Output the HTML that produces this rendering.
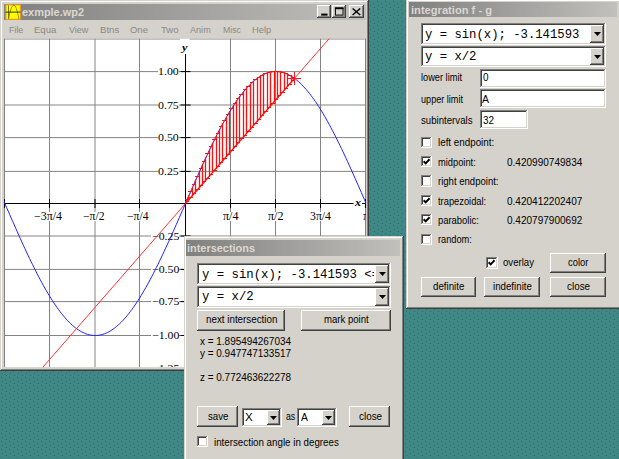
<!DOCTYPE html>
<html lang="en"><head><meta charset="utf-8"><title>exmple.wp2</title>
<style>
html,body{margin:0;padding:0}
body{width:619px;height:459px;overflow:hidden;position:relative;background:#3f8886}
#bg{position:absolute;left:0;top:0}
div,span,svg{position:absolute;display:block}
span{white-space:pre;transform-origin:0 0}
.w{left:0;top:0;width:619px;height:459px;overflow:hidden;will-change:opacity}
</style></head>
<body>
<svg id="bg" width="619" height="459"><defs><pattern id="dp" width="8" height="8" patternUnits="userSpaceOnUse"><rect width="8" height="8" fill="#3f8886"/><rect x="1" y="1" width="1" height="1" fill="#2f6f70"/><rect x="5" y="3" width="1" height="1" fill="#2f6f70"/><rect x="2" y="5" width="1" height="1" fill="#2f6f70"/><rect x="6" y="7" width="1" height="1" fill="#2f6f70"/></pattern></defs><rect width="619" height="459" fill="url(#dp)"/></svg>
<div class="w">
<div style="left:0.00px;top:0.00px;width:369.00px;height:371.00px;background:#d5d2cb;box-shadow:inset -1px -1px 0 #404040,inset 1px 1px 0 #d5d2cb,inset -2px -2px 0 #808080,inset 2px 2px 0 #fff;"></div>
<div style="left:4.00px;top:4.00px;width:361.50px;height:16.00px;background:linear-gradient(90deg,#808080,#c2c0bc);"></div>
<svg style="left:5px;top:4px" width="16" height="16" viewBox="-0.5 -0.5 16 16"><rect x="0.4" y="0.4" width="14.4" height="14.4" fill="#ffff00" stroke="#f49a18" stroke-width="1"/><path d="M3 1V14" stroke="#6a6a00" stroke-width="0.9" fill="none"/><path d="M3 14.5Q8.4 -13.4 13.4 14.5" stroke="#77770a" stroke-width="0.8" fill="none"/><path d="M0 7.6H15" stroke="#202000" stroke-width="0.9" fill="none"/></svg>
<div style="left:317.30px;top:5.40px;width:14.00px;height:12.70px;background:#d5d2cb;box-shadow:inset -1px -1px 0 #404040,inset 1px 1px 0 #fff,inset -2px -2px 0 #808080,inset 2px 2px 0 #d5d2cb;"></div>
<div style="left:332.10px;top:5.40px;width:14.30px;height:12.70px;background:#d5d2cb;box-shadow:inset -1px -1px 0 #404040,inset 1px 1px 0 #fff,inset -2px -2px 0 #808080,inset 2px 2px 0 #d5d2cb;"></div>
<div style="left:348.80px;top:5.40px;width:14.80px;height:12.70px;background:#d5d2cb;box-shadow:inset -1px -1px 0 #404040,inset 1px 1px 0 #fff,inset -2px -2px 0 #808080,inset 2px 2px 0 #d5d2cb;"></div>
<svg style="left:317px;top:5px" width="48" height="14" viewBox="317 5 48 14"><rect x="321.2" y="13.6" width="6.3" height="2" fill="#000"/><rect x="335.4" y="8.1" width="7.6" height="7" fill="none" stroke="#000" stroke-width="1"/><rect x="334.9" y="7.4" width="8.6" height="1.8" fill="#000"/><path d="M352.6 8.5L360.2 15M360.2 8.5L352.6 15" stroke="#000" stroke-width="1.5"/></svg>
<svg style="left:0;top:0" width="619" height="459" viewBox="0 0 619 459"><defs><clipPath id="gc"><rect x="4.0" y="38.4" width="362.0" height="328.90000000000003"/></clipPath></defs><g clip-path="url(#gc)"><rect x="4.0" y="38.4" width="362.0" height="328.90000000000003" fill="#fff"/><path d="M4.5 38.4V367.3M49.5 38.4V367.3M95.0 38.4V367.3M139.5 38.4V367.3M230.5 38.4V367.3M275.5 38.4V367.3M320.5 38.4V367.3M365.5 38.4V367.3M4.0 368.5H366M4.0 335.5H366M4.0 301.6H366M4.0 269.4H366M4.0 236.0H366M4.0 171.4H366M4.0 137.6H366M4.0 105.0H366M4.0 71.6H366M4.0 39.0H366" stroke="#848484" stroke-width="1" fill="none"/></g></svg>
<div style="left:4px;top:38px;width:362px;height:329px;overflow:hidden"><div style="left:-4px;top:-38px;width:619px;height:459px"><div style="left:33.50px;top:211.95px;width:29.00px;height:8.97px;background:#fff"></div><span style="left:34.00px;top:210.00px;font:normal normal 11.5px/1.2 'Liberation Serif', serif;color:#000;transform:scaleX(1.0370)">−3π/4</span><div style="left:82.25px;top:211.95px;width:22.50px;height:8.97px;background:#fff"></div><span style="left:82.75px;top:210.00px;font:normal normal 11.5px/1.2 'Liberation Serif', serif;color:#000;transform:scaleX(1.0118)">−π/2</span><div style="left:126.75px;top:211.95px;width:22.50px;height:8.97px;background:#fff"></div><span style="left:127.25px;top:210.00px;font:normal normal 11.5px/1.2 'Liberation Serif', serif;color:#000;transform:scaleX(1.0118)">−π/4</span><div style="left:222.25px;top:211.95px;width:16.50px;height:8.97px;background:#fff"></div><span style="left:222.75px;top:210.00px;font:normal normal 11.5px/1.2 'Liberation Serif', serif;color:#000;transform:scaleX(1.0497)">π/4</span><div style="left:267.25px;top:211.95px;width:16.50px;height:8.97px;background:#fff"></div><span style="left:267.75px;top:210.00px;font:normal normal 11.5px/1.2 'Liberation Serif', serif;color:#000;transform:scaleX(1.0497)">π/2</span><div style="left:309.50px;top:211.95px;width:22.00px;height:8.97px;background:#fff"></div><span style="left:310.00px;top:210.00px;font:normal normal 11.5px/1.2 'Liberation Serif', serif;color:#000;transform:scaleX(1.0236)">3π/4</span><div style="left:157.70px;top:67.50px;width:21.80px;height:8.58px;background:#fff"></div><span style="left:158.20px;top:65.20px;font:normal normal 11px/1.2 'Liberation Serif', serif;color:#000;transform:scaleX(1.0805)">1.00</span><div style="left:157.70px;top:100.90px;width:21.80px;height:8.58px;background:#fff"></div><span style="left:158.20px;top:98.60px;font:normal normal 11px/1.2 'Liberation Serif', serif;color:#000;transform:scaleX(1.0805)">0.75</span><div style="left:157.70px;top:133.50px;width:21.80px;height:8.58px;background:#fff"></div><span style="left:158.20px;top:131.20px;font:normal normal 11px/1.2 'Liberation Serif', serif;color:#000;transform:scaleX(1.0805)">0.50</span><div style="left:157.70px;top:167.30px;width:21.80px;height:8.58px;background:#fff"></div><span style="left:158.20px;top:165.00px;font:normal normal 11px/1.2 'Liberation Serif', serif;color:#000;transform:scaleX(1.0805)">0.25</span><div style="left:151.10px;top:231.90px;width:28.40px;height:8.58px;background:#fff"></div><span style="left:151.60px;top:229.60px;font:normal normal 11px/1.2 'Liberation Serif', serif;color:#000;transform:scaleX(1.0758)">−0.25</span><div style="left:151.10px;top:265.30px;width:28.40px;height:8.58px;background:#fff"></div><span style="left:151.60px;top:263.00px;font:normal normal 11px/1.2 'Liberation Serif', serif;color:#000;transform:scaleX(1.0758)">−0.50</span><div style="left:151.10px;top:297.50px;width:28.40px;height:8.58px;background:#fff"></div><span style="left:151.60px;top:295.20px;font:normal normal 11px/1.2 'Liberation Serif', serif;color:#000;transform:scaleX(1.0758)">−0.75</span><div style="left:151.10px;top:331.40px;width:28.40px;height:8.58px;background:#fff"></div><span style="left:151.60px;top:329.10px;font:normal normal 11px/1.2 'Liberation Serif', serif;color:#000;transform:scaleX(1.0758)">−1.00</span><div style="left:151.10px;top:364.40px;width:28.40px;height:8.58px;background:#fff"></div><span style="left:151.60px;top:362.10px;font:normal normal 11px/1.2 'Liberation Serif', serif;color:#000;transform:scaleX(1.0758)">−1.25</span><div style="left:181.30px;top:43.25px;width:6.40px;height:8.19px;background:#fff"></div><span style="left:181.80px;top:41.60px;font:italic bold 10.5px/1.2 'Liberation Serif', serif;color:#000;transform:scaleX(1.1559)">y</span><div style="left:354.50px;top:198.65px;width:7.00px;height:8.19px;background:#fff"></div><span style="left:355.00px;top:197.00px;font:italic bold 10.5px/1.2 'Liberation Serif', serif;color:#000;transform:scaleX(1.1429)">x</span><span style="left:363.00px;top:210.00px;font:normal normal 11.5px/1.2 'Liberation Serif', serif;color:#000;transform:scaleX(1.0323)">π</span></div></div>
<svg style="left:0;top:0" width="619" height="459" viewBox="0 0 619 459"><g clip-path="url(#gc)"><path d="M4.0 203.5H353.5M362 203.5H366M185.5 54V367.3M4.5 199.0V208.0M49.5 199.0V208.0M95.0 199.0V208.0M139.5 199.0V208.0M230.5 199.0V208.0M275.5 199.0V208.0M320.5 199.0V208.0M365.5 199.0V208.0M180.5 368.5H190.5M180.5 335.5H190.5M180.5 301.6H190.5M180.5 269.4H190.5M180.5 236.0H190.5M180.5 171.4H190.5M180.5 137.6H190.5M180.5 105.0H190.5M180.5 71.6H190.5" stroke="#000" stroke-width="1" fill="none"/><rect x="180" y="38.4" width="9.5" height="1.6" fill="#fff"/><path d="M1.99 196.90L3.51 200.41L5.04 203.92L6.57 207.43L8.10 210.94L9.63 214.44L11.16 217.94L12.69 221.42L14.22 224.89L15.75 228.35L17.28 231.79L18.81 235.21L20.34 238.60L21.87 241.97L23.40 245.32L24.92 248.63L26.45 251.91L27.98 255.16L29.51 258.38L31.04 261.55L32.57 264.68L34.10 267.77L35.63 270.81L37.16 273.81L38.69 276.76L40.22 279.65L41.75 282.49L43.28 285.27L44.81 288.00L46.33 290.67L47.86 293.27L49.39 295.81L50.92 298.29L52.45 300.70L53.98 303.04L55.51 305.31L57.04 307.51L58.57 309.63L60.10 311.68L61.63 313.66L63.16 315.55L64.69 317.37L66.22 319.10L67.74 320.76L69.27 322.33L70.80 323.81L72.33 325.22L73.86 326.53L75.39 327.76L76.92 328.90L78.45 329.95L79.98 330.91L81.51 331.79L83.04 332.57L84.57 333.26L86.10 333.86L87.63 334.36L89.15 334.78L90.68 335.10L92.21 335.32L93.74 335.46L95.27 335.50L96.80 335.45L98.33 335.30L99.86 335.06L101.39 334.73L102.92 334.31L104.45 333.79L105.98 333.18L107.51 332.48L109.04 331.69L110.56 330.80L112.09 329.83L113.62 328.77L115.15 327.62L116.68 326.38L118.21 325.05L119.74 323.64L121.27 322.14L122.80 320.56L124.33 318.90L125.86 317.15L127.39 315.33L128.92 313.42L130.45 311.44L131.97 309.38L133.50 307.25L135.03 305.04L136.56 302.76L138.09 300.42L139.62 298.00L141.15 295.51L142.68 292.96L144.21 290.35L145.74 287.68L147.27 284.94L148.80 282.15L150.33 279.30L151.86 276.40L153.38 273.45L154.91 270.45L156.44 267.40L157.97 264.31L159.50 261.17L161.03 257.99L162.56 254.78L164.09 251.52L165.62 248.24L167.15 244.92L168.68 241.57L170.21 238.20L171.74 234.80L173.27 231.37L174.79 227.93L176.32 224.48L177.85 221.00L179.38 217.52L180.91 214.02L182.44 210.52L183.97 207.01L185.50 203.50L187.03 199.99L188.56 196.48L190.09 192.98L191.62 189.48L193.15 186.00L194.68 182.52L196.21 179.07L197.73 175.63L199.26 172.20L200.79 168.80L202.32 165.43L203.85 162.08L205.38 158.76L206.91 155.48L208.44 152.22L209.97 149.01L211.50 145.83L213.03 142.69L214.56 139.60L216.09 136.55L217.62 133.55L219.14 130.60L220.67 127.70L222.20 124.85L223.73 122.06L225.26 119.32L226.79 116.65L228.32 114.04L229.85 111.49L231.38 109.00L232.91 106.58L234.44 104.24L235.97 101.96L237.50 99.75L239.03 97.62L240.55 95.56L242.08 93.58L243.61 91.67L245.14 89.85L246.67 88.10L248.20 86.44L249.73 84.86L251.26 83.36L252.79 81.95L254.32 80.62L255.85 79.38L257.38 78.23L258.91 77.17L260.44 76.20L261.96 75.31L263.49 74.52L265.02 73.82L266.55 73.21L268.08 72.69L269.61 72.27L271.14 71.94L272.67 71.70L274.20 71.55L275.73 71.50L277.26 71.54L278.79 71.68L280.32 71.90L281.85 72.22L283.37 72.64L284.90 73.14L286.43 73.74L287.96 74.43L289.49 75.21L291.02 76.09L292.55 77.05L294.08 78.10L295.61 79.24L297.14 80.47L298.67 81.78L300.20 83.19L301.73 84.67L303.26 86.24L304.78 87.90L306.31 89.63L307.84 91.45L309.37 93.34L310.90 95.32L312.43 97.37L313.96 99.49L315.49 101.69L317.02 103.96L318.55 106.30L320.08 108.71L321.61 111.19L323.14 113.73L324.67 116.33L326.19 119.00L327.72 121.73L329.25 124.51L330.78 127.35L332.31 130.24L333.84 133.19L335.37 136.19L336.90 139.23L338.43 142.32L339.96 145.45L341.49 148.62L343.02 151.84L344.55 155.09L346.08 158.37L347.60 161.68L349.13 165.03L350.66 168.40L352.19 171.79L353.72 175.21L355.25 178.65L356.78 182.11L358.31 185.58L359.84 189.06L361.37 192.56L362.90 196.06L364.43 199.57L365.96 203.08L367.49 206.59L369.01 210.10" stroke="#2020ff" stroke-width="1" fill="none"/><path d="M-4.25 421.30L335.00 31.90" stroke="#ff2828" stroke-width="0.95" fill="none"/><path d="M185.5 204.0V203.0M188.5 200.1V195.2M192.5 196.2V187.4M195.5 192.3V179.7M199.5 188.4V172.0M202.5 184.5V164.5M205.5 180.5V157.1M209.5 176.6V149.8M212.5 172.7V142.8M216.5 168.8V135.9M219.5 164.9V129.3M222.5 161.0V122.9M226.5 157.1V116.9M229.5 153.2V111.1M233.5 149.3V105.7M236.5 145.4V100.6M239.5 141.4V95.8M243.5 137.5V91.4M246.5 133.6V87.5M250.5 129.7V83.9M253.5 125.8V80.7M257.5 121.9V78.0M260.5 118.0V75.7M263.5 114.1V73.9M267.5 110.2V72.5M270.5 106.3V71.5M274.5 102.4V71.1M277.5 98.4V71.1M280.5 94.5V71.5M284.5 90.6V72.4M287.5 86.7V73.8M291.5 82.8V75.6M294.5 78.9V77.9" stroke="#ff1010" stroke-width="1.3" fill="none"/><path d="M185 199.5H189M185 201.5H189M188 191.5H193M188 197.5H193M192 184.5H196M192 193.5H196M195 176.5H200M195 189.5H200M199 168.5H203M199 185.5H203M202 161.5H206M202 181.5H206M205 153.5H210M205 178.5H210M209 146.5H213M209 174.5H213M212 139.5H217M212 170.5H217M216 133.5H220M216 166.5H220M219 126.5H223M219 162.5H223M222 120.5H227M222 158.5H227M226 114.5H230M226 154.5H230M229 108.5H234M229 150.5H234M233 103.5H237M233 146.5H237M236 98.5H240M236 142.5H240M239 94.5H244M239 138.5H244M243 89.5H247M243 135.5H247M246 86.5H251M246 131.5H251M250 82.5H254M250 127.5H254M253 79.5H258M253 123.5H258M257 77.5H261M257 119.5H261M260 75.5H264M260 115.5H264M263 73.5H268M263 111.5H268M267 72.5H271M267 107.5H271M270 71.5H275M270 103.5H275M274 71.5H278M274 99.5H278M277 71.5H281M277 95.5H281M280 72.5H285M280 92.5H285M284 73.5H288M284 88.5H288M287 75.5H292M287 84.5H292M291 77.5H295M291 80.5H295" stroke="#ff1010" stroke-width="1.2" fill="none"/><path d="M185.50 203.50L188.91 195.69L192.31 187.90L195.72 180.17L199.12 172.52L202.53 164.97L205.94 157.57L209.34 150.32L212.75 143.26L216.15 136.42L219.56 129.80L222.97 123.45L226.37 117.38L229.78 111.61L233.18 106.16L236.59 101.05L239.99 96.30L243.40 91.93L246.81 87.95L250.21 84.38L253.62 81.22L257.02 78.49L260.43 76.20L263.84 74.36L267.24 72.97L270.65 72.03L274.05 71.56L277.46 71.55L280.87 72.01L284.27 72.92L287.68 74.30L291.08 76.12L294.49 78.40" stroke="#ff1010" stroke-width="0.8" fill="none" opacity="0.6"/><path d="M185.50 203.50L294.49 78.40" stroke="#ff1010" stroke-width="1.3" fill="none" opacity="0.9"/><path d="M288.00 78.50H301.00M294.50 72.00V85.00" stroke="#ff1818" stroke-width="1" fill="none"/></g></svg>
<span style="left:22.00px;top:5.70px;font:normal bold 11px/1.2 'Liberation Sans', sans-serif;color:#dcd8d0;transform:scaleX(0.9942)">exmple.wp2</span>
<span style="left:9.00px;top:24.20px;font:normal normal 9.6px/1.2 'Liberation Sans', sans-serif;color:#8a8884;transform:scaleX(0.9244)">File</span>
<span style="left:34.40px;top:24.20px;font:normal normal 9.6px/1.2 'Liberation Sans', sans-serif;color:#8a8884;transform:scaleX(0.9908)">Equa</span>
<span style="left:68.50px;top:24.20px;font:normal normal 9.6px/1.2 'Liberation Sans', sans-serif;color:#8a8884;transform:scaleX(0.9358)">View</span>
<span style="left:99.50px;top:24.20px;font:normal normal 9.6px/1.2 'Liberation Sans', sans-serif;color:#8a8884;transform:scaleX(1.0050)">Btns</span>
<span style="left:130.40px;top:24.20px;font:normal normal 9.6px/1.2 'Liberation Sans', sans-serif;color:#8a8884;transform:scaleX(0.9867)">One</span>
<span style="left:160.70px;top:24.20px;font:normal normal 9.6px/1.2 'Liberation Sans', sans-serif;color:#8a8884;transform:scaleX(0.9938)">Two</span>
<span style="left:190.00px;top:24.20px;font:normal normal 9.6px/1.2 'Liberation Sans', sans-serif;color:#8a8884;transform:scaleX(0.9470)">Anim</span>
<span style="left:222.50px;top:24.20px;font:normal normal 9.6px/1.2 'Liberation Sans', sans-serif;color:#8a8884;transform:scaleX(0.9027)">Misc</span>
<span style="left:251.90px;top:24.20px;font:normal normal 9.6px/1.2 'Liberation Sans', sans-serif;color:#8a8884;transform:scaleX(0.9729)">Help</span>
</div>
<div class="w">
<div style="left:406.00px;top:-1.00px;width:230.00px;height:310.20px;background:#d5d2cb;box-shadow:inset -1px -1px 0 #404040,inset 1px 1px 0 #d5d2cb,inset -2px -2px 0 #808080,inset 2px 2px 0 #fff;"></div>
<div style="left:409.00px;top:2.00px;width:208.00px;height:15.30px;background:linear-gradient(90deg,#808080,#c2c0bc);"></div>
<div style="left:420.50px;top:23.30px;width:185.50px;height:21.60px;background:#fff;box-shadow:inset -1px -1px 0 #fff,inset 1px 1px 0 #808080,inset -2px -2px 0 #d5d2cb,inset 2px 2px 0 #404040;"></div>
<div style="left:590.00px;top:25.30px;width:14.00px;height:17.60px;background:#d5d2cb;box-shadow:inset -1px -1px 0 #404040,inset 1px 1px 0 #fff,inset -2px -2px 0 #808080,inset 2px 2px 0 #d5d2cb;"></div>
<svg style="left:593.50px;top:32.40px" width="7" height="4" viewBox="0 0 7 4"><path d="M0 0H7L3.5 4Z" fill="#000"/></svg>
<div style="left:420.50px;top:45.90px;width:185.50px;height:21.20px;background:#fff;box-shadow:inset -1px -1px 0 #fff,inset 1px 1px 0 #808080,inset -2px -2px 0 #d5d2cb,inset 2px 2px 0 #404040;"></div>
<div style="left:590.00px;top:47.90px;width:14.00px;height:17.20px;background:#d5d2cb;box-shadow:inset -1px -1px 0 #404040,inset 1px 1px 0 #fff,inset -2px -2px 0 #808080,inset 2px 2px 0 #d5d2cb;"></div>
<svg style="left:593.50px;top:54.80px" width="7" height="4" viewBox="0 0 7 4"><path d="M0 0H7L3.5 4Z" fill="#000"/></svg>
<div style="left:479.50px;top:68.80px;width:126.00px;height:18.80px;background:#fff;box-shadow:inset -1px -1px 0 #fff,inset 1px 1px 0 #808080,inset -2px -2px 0 #d5d2cb,inset 2px 2px 0 #404040;"></div>
<div style="left:479.50px;top:89.40px;width:126.00px;height:19.00px;background:#fff;box-shadow:inset -1px -1px 0 #fff,inset 1px 1px 0 #808080,inset -2px -2px 0 #d5d2cb,inset 2px 2px 0 #404040;"></div>
<div style="left:479.50px;top:110.20px;width:48.90px;height:19.00px;background:#fff;box-shadow:inset -1px -1px 0 #fff,inset 1px 1px 0 #808080,inset -2px -2px 0 #d5d2cb,inset 2px 2px 0 #404040;"></div>
<div style="left:420.60px;top:136.70px;width:11.20px;height:11.20px;background:#fff;box-shadow:inset -1px -1px 0 #fff,inset 1px 1px 0 #808080,inset -2px -2px 0 #d5d2cb,inset 2px 2px 0 #404040;"></div>
<div style="left:420.60px;top:155.90px;width:11.20px;height:11.20px;background:#fff;box-shadow:inset -1px -1px 0 #fff,inset 1px 1px 0 #808080,inset -2px -2px 0 #d5d2cb,inset 2px 2px 0 #404040;"></div>
<svg style="left:420.60px;top:155.90px" width="11.2" height="11.2" viewBox="0 0 11 11"><path d="M2.6 5.2L4.6 7.2L8.4 3.2" stroke="#000" stroke-width="1.9" fill="none"/></svg>
<div style="left:420.60px;top:175.40px;width:11.20px;height:11.20px;background:#fff;box-shadow:inset -1px -1px 0 #fff,inset 1px 1px 0 #808080,inset -2px -2px 0 #d5d2cb,inset 2px 2px 0 #404040;"></div>
<div style="left:420.60px;top:194.80px;width:11.20px;height:11.20px;background:#fff;box-shadow:inset -1px -1px 0 #fff,inset 1px 1px 0 #808080,inset -2px -2px 0 #d5d2cb,inset 2px 2px 0 #404040;"></div>
<svg style="left:420.60px;top:194.80px" width="11.2" height="11.2" viewBox="0 0 11 11"><path d="M2.6 5.2L4.6 7.2L8.4 3.2" stroke="#000" stroke-width="1.9" fill="none"/></svg>
<div style="left:420.60px;top:214.20px;width:11.20px;height:11.20px;background:#fff;box-shadow:inset -1px -1px 0 #fff,inset 1px 1px 0 #808080,inset -2px -2px 0 #d5d2cb,inset 2px 2px 0 #404040;"></div>
<svg style="left:420.60px;top:214.20px" width="11.2" height="11.2" viewBox="0 0 11 11"><path d="M2.6 5.2L4.6 7.2L8.4 3.2" stroke="#000" stroke-width="1.9" fill="none"/></svg>
<div style="left:420.60px;top:233.80px;width:11.20px;height:11.20px;background:#fff;box-shadow:inset -1px -1px 0 #fff,inset 1px 1px 0 #808080,inset -2px -2px 0 #d5d2cb,inset 2px 2px 0 #404040;"></div>
<div style="left:486.40px;top:257.40px;width:11.20px;height:11.20px;background:#fff;box-shadow:inset -1px -1px 0 #fff,inset 1px 1px 0 #808080,inset -2px -2px 0 #d5d2cb,inset 2px 2px 0 #404040;"></div>
<svg style="left:486.40px;top:257.40px" width="11.2" height="11.2" viewBox="0 0 11 11"><path d="M2.6 5.2L4.6 7.2L8.4 3.2" stroke="#000" stroke-width="1.9" fill="none"/></svg>
<div style="left:550.00px;top:252.60px;width:56.00px;height:20.60px;background:#d5d2cb;box-shadow:inset -1px -1px 0 #404040,inset 1px 1px 0 #fff,inset -2px -2px 0 #808080,inset 2px 2px 0 #d5d2cb;"></div>
<div style="left:420.50px;top:276.60px;width:55.50px;height:20.60px;background:#d5d2cb;box-shadow:inset -1px -1px 0 #404040,inset 1px 1px 0 #fff,inset -2px -2px 0 #808080,inset 2px 2px 0 #d5d2cb;"></div>
<div style="left:484.00px;top:276.60px;width:55.60px;height:20.60px;background:#d5d2cb;box-shadow:inset -1px -1px 0 #404040,inset 1px 1px 0 #fff,inset -2px -2px 0 #808080,inset 2px 2px 0 #d5d2cb;"></div>
<div style="left:550.00px;top:276.60px;width:56.00px;height:20.60px;background:#d5d2cb;box-shadow:inset -1px -1px 0 #404040,inset 1px 1px 0 #fff,inset -2px -2px 0 #808080,inset 2px 2px 0 #d5d2cb;"></div>
<span style="left:411.00px;top:3.60px;font:normal bold 11px/1.2 'Liberation Sans', sans-serif;color:#dcd8d0;transform:scaleX(1.0119)">integration f - g</span>
<span style="left:424.60px;top:28.40px;font:normal normal 12.4px/1.2 'Liberation Mono', monospace;color:#000;transform:scaleX(0.9884)">y = sin(x); -3.141593</span>
<span style="left:424.60px;top:50.40px;font:normal normal 12.4px/1.2 'Liberation Mono', monospace;color:#000;transform:scaleX(0.9882)">y = x/2</span>
<span style="left:421.00px;top:71.20px;font:normal normal 11px/1.2 'Liberation Sans', sans-serif;color:#000;transform:scaleX(0.8383)">lower limit</span>
<span style="left:421.00px;top:92.60px;font:normal normal 11px/1.2 'Liberation Sans', sans-serif;color:#000;transform:scaleX(0.8276)">upper limit</span>
<span style="left:421.00px;top:113.60px;font:normal normal 11px/1.2 'Liberation Sans', sans-serif;color:#000;transform:scaleX(0.8773)">subintervals</span>
<span style="left:482.50px;top:71.40px;font:normal normal 11px/1.2 'Liberation Sans', sans-serif;color:#000;transform:scaleX(0.8980)">0</span>
<span style="left:482.00px;top:92.60px;font:normal normal 11px/1.2 'Liberation Sans', sans-serif;color:#000;transform:scaleX(0.9532)">A</span>
<span style="left:482.50px;top:113.60px;font:normal normal 11px/1.2 'Liberation Sans', sans-serif;color:#000;transform:scaleX(0.8980)">32</span>
<span style="left:438.00px;top:136.20px;font:normal normal 11px/1.2 'Liberation Sans', sans-serif;color:#000;transform:scaleX(0.8921)">left endpoint:</span>
<span style="left:438.00px;top:155.50px;font:normal normal 11px/1.2 'Liberation Sans', sans-serif;color:#000;transform:scaleX(0.8468)">midpoint:</span>
<span style="left:507.00px;top:155.50px;font:normal normal 11px/1.2 'Liberation Sans', sans-serif;color:#000;transform:scaleX(0.9117)">0.420990749834</span>
<span style="left:438.00px;top:175.10px;font:normal normal 11px/1.2 'Liberation Sans', sans-serif;color:#000;transform:scaleX(0.8678)">right endpoint:</span>
<span style="left:438.00px;top:194.50px;font:normal normal 11px/1.2 'Liberation Sans', sans-serif;color:#000;transform:scaleX(0.8475)">trapezoidal:</span>
<span style="left:507.00px;top:194.50px;font:normal normal 11px/1.2 'Liberation Sans', sans-serif;color:#000;transform:scaleX(0.9117)">0.420412202407</span>
<span style="left:438.00px;top:213.80px;font:normal normal 11px/1.2 'Liberation Sans', sans-serif;color:#000;transform:scaleX(0.8553)">parabolic:</span>
<span style="left:507.00px;top:213.80px;font:normal normal 11px/1.2 'Liberation Sans', sans-serif;color:#000;transform:scaleX(0.9117)">0.420797900692</span>
<span style="left:438.00px;top:233.20px;font:normal normal 11px/1.2 'Liberation Sans', sans-serif;color:#000;transform:scaleX(0.8375)">random:</span>
<span style="left:503.30px;top:255.80px;font:normal normal 11px/1.2 'Liberation Sans', sans-serif;color:#000;transform:scaleX(0.8740)">overlay</span>
<span style="left:568.30px;top:255.60px;font:normal normal 11px/1.2 'Liberation Sans', sans-serif;color:#000;transform:scaleX(0.8556)">color</span>
<span style="left:433.10px;top:279.60px;font:normal normal 11px/1.2 'Liberation Sans', sans-serif;color:#000;transform:scaleX(0.8821)">definite</span>
<span style="left:493.10px;top:279.60px;font:normal normal 11px/1.2 'Liberation Sans', sans-serif;color:#000;transform:scaleX(0.8832)">indefinite</span>
<span style="left:566.60px;top:279.60px;font:normal normal 11px/1.2 'Liberation Sans', sans-serif;color:#000;transform:scaleX(0.8993)">close</span>
</div>
<div class="w">
<div style="left:183.60px;top:236.10px;width:220.80px;height:240.00px;background:#d5d2cb;box-shadow:inset -1px -1px 0 #404040,inset 1px 1px 0 #d5d2cb,inset -2px -2px 0 #808080,inset 2px 2px 0 #fff;"></div>
<div style="left:186.40px;top:239.50px;width:214.00px;height:16.90px;background:linear-gradient(90deg,#808080,#c2c0bc);"></div>
<div style="left:197.00px;top:263.30px;width:194.00px;height:21.50px;background:#fff;box-shadow:inset -1px -1px 0 #fff,inset 1px 1px 0 #808080,inset -2px -2px 0 #d5d2cb,inset 2px 2px 0 #404040;"></div>
<div style="left:375.20px;top:265.30px;width:13.80px;height:17.50px;background:#d5d2cb;box-shadow:inset -1px -1px 0 #404040,inset 1px 1px 0 #fff,inset -2px -2px 0 #808080,inset 2px 2px 0 #d5d2cb;"></div>
<svg style="left:378.60px;top:272.35px" width="7" height="4" viewBox="0 0 7 4"><path d="M0 0H7L3.5 4Z" fill="#000"/></svg>
<div style="left:197.00px;top:286.10px;width:194.00px;height:21.50px;background:#fff;box-shadow:inset -1px -1px 0 #fff,inset 1px 1px 0 #808080,inset -2px -2px 0 #d5d2cb,inset 2px 2px 0 #404040;"></div>
<div style="left:375.20px;top:288.10px;width:13.80px;height:17.50px;background:#d5d2cb;box-shadow:inset -1px -1px 0 #404040,inset 1px 1px 0 #fff,inset -2px -2px 0 #808080,inset 2px 2px 0 #d5d2cb;"></div>
<svg style="left:378.60px;top:295.15px" width="7" height="4" viewBox="0 0 7 4"><path d="M0 0H7L3.5 4Z" fill="#000"/></svg>
<div style="left:197.00px;top:310.00px;width:88.40px;height:20.70px;background:#d5d2cb;box-shadow:inset -1px -1px 0 #404040,inset 1px 1px 0 #fff,inset -2px -2px 0 #808080,inset 2px 2px 0 #d5d2cb;"></div>
<div style="left:301.40px;top:310.00px;width:89.60px;height:20.70px;background:#d5d2cb;box-shadow:inset -1px -1px 0 #404040,inset 1px 1px 0 #fff,inset -2px -2px 0 #808080,inset 2px 2px 0 #d5d2cb;"></div>
<div style="left:197.00px;top:406.40px;width:41.20px;height:20.40px;background:#d5d2cb;box-shadow:inset -1px -1px 0 #404040,inset 1px 1px 0 #fff,inset -2px -2px 0 #808080,inset 2px 2px 0 #d5d2cb;"></div>
<div style="left:241.60px;top:408.20px;width:40.40px;height:18.40px;background:#fff;box-shadow:inset -1px -1px 0 #fff,inset 1px 1px 0 #808080,inset -2px -2px 0 #d5d2cb,inset 2px 2px 0 #404040;"></div>
<div style="left:266.50px;top:410.20px;width:13.50px;height:14.40px;background:#d5d2cb;box-shadow:inset -1px -1px 0 #404040,inset 1px 1px 0 #fff,inset -2px -2px 0 #808080,inset 2px 2px 0 #d5d2cb;"></div>
<svg style="left:269.75px;top:415.70px" width="7" height="4" viewBox="0 0 7 4"><path d="M0 0H7L3.5 4Z" fill="#000"/></svg>
<div style="left:297.20px;top:408.20px;width:40.00px;height:18.40px;background:#fff;box-shadow:inset -1px -1px 0 #fff,inset 1px 1px 0 #808080,inset -2px -2px 0 #d5d2cb,inset 2px 2px 0 #404040;"></div>
<div style="left:321.70px;top:410.20px;width:13.50px;height:14.40px;background:#d5d2cb;box-shadow:inset -1px -1px 0 #404040,inset 1px 1px 0 #fff,inset -2px -2px 0 #808080,inset 2px 2px 0 #d5d2cb;"></div>
<svg style="left:324.95px;top:415.70px" width="7" height="4" viewBox="0 0 7 4"><path d="M0 0H7L3.5 4Z" fill="#000"/></svg>
<div style="left:349.30px;top:406.40px;width:41.10px;height:20.40px;background:#d5d2cb;box-shadow:inset -1px -1px 0 #404040,inset 1px 1px 0 #fff,inset -2px -2px 0 #808080,inset 2px 2px 0 #d5d2cb;"></div>
<div style="left:197.00px;top:436.20px;width:11.20px;height:11.20px;background:#fff;box-shadow:inset -1px -1px 0 #fff,inset 1px 1px 0 #808080,inset -2px -2px 0 #d5d2cb,inset 2px 2px 0 #404040;"></div>
<span style="left:187.00px;top:242.00px;font:normal bold 11px/1.2 'Liberation Sans', sans-serif;color:#dcd8d0;transform:scaleX(0.9932)">intersections</span>
<div style="left:201.60px;top:268.00px;width:172.6px;height:14.9px;overflow:hidden"><span style="left:0;top:0;font:normal normal 12.4px/1.2 'Liberation Mono', monospace;color:#000;transform:scaleX(0.9924)">y = sin(x); -3.141593 &lt;=</span></div>
<span style="left:201.60px;top:290.00px;font:normal normal 12.4px/1.2 'Liberation Mono', monospace;color:#000;transform:scaleX(0.9923)">y = x/2</span>
<span style="left:205.90px;top:313.20px;font:normal normal 11px/1.2 'Liberation Sans', sans-serif;color:#000;transform:scaleX(0.8913)">next intersection</span>
<span style="left:323.70px;top:313.20px;font:normal normal 11px/1.2 'Liberation Sans', sans-serif;color:#000;transform:scaleX(0.8703)">mark point</span>
<span style="left:200.00px;top:335.00px;font:normal normal 11px/1.2 'Liberation Sans', sans-serif;color:#000;transform:scaleX(0.9043)">x = 1.895494267034</span>
<span style="left:200.00px;top:347.00px;font:normal normal 11px/1.2 'Liberation Sans', sans-serif;color:#000;transform:scaleX(0.9043)">y = 0.947747133517</span>
<span style="left:200.00px;top:370.80px;font:normal normal 11px/1.2 'Liberation Sans', sans-serif;color:#000;transform:scaleX(0.9043)">z = 0.772463622278</span>
<span style="left:207.70px;top:410.00px;font:normal normal 11px/1.2 'Liberation Sans', sans-serif;color:#000;transform:scaleX(0.8817)">save</span>
<span style="left:244.60px;top:411.30px;font:normal normal 11px/1.2 'Liberation Sans', sans-serif;color:#000;transform:scaleX(1.0485)">X</span>
<span style="left:285.90px;top:410.00px;font:normal normal 11px/1.2 'Liberation Sans', sans-serif;color:#000;transform:scaleX(0.7914)">as</span>
<span style="left:300.60px;top:411.30px;font:normal normal 11px/1.2 'Liberation Sans', sans-serif;color:#000;transform:scaleX(0.9396)">A</span>
<span style="left:358.80px;top:410.00px;font:normal normal 11px/1.2 'Liberation Sans', sans-serif;color:#000;transform:scaleX(0.8993)">close</span>
<span style="left:214.00px;top:435.80px;font:normal normal 11px/1.2 'Liberation Sans', sans-serif;color:#000;transform:scaleX(0.8873)">intersection angle in degrees</span>
</div>
</body></html>
